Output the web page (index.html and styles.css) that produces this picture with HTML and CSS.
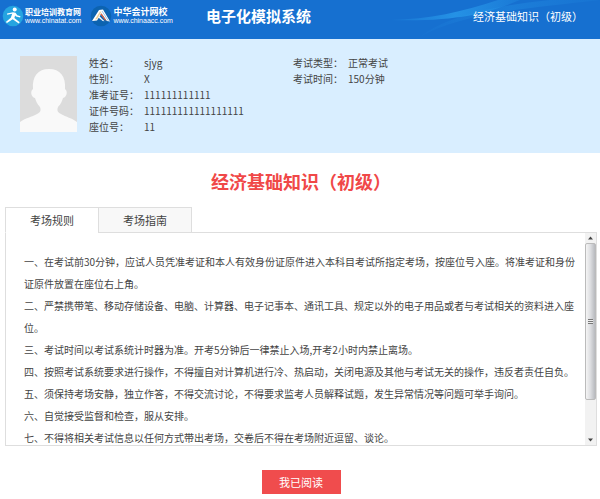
FILE: index.html
```html
<!DOCTYPE html>
<html lang="zh-CN">
<head>
<meta charset="utf-8">
<meta name="viewport" content="width=device-width, initial-scale=1">
<title>电子化模拟系统</title>
<link rel="stylesheet" href="styles.css">
</head>
<body>
<header class="topbar">
  <svg class="swoosh" viewBox="0 0 210 39" aria-hidden="true">
    <defs>
      <linearGradient id="beam" x1="0" x2="1" y1="0" y2="0">
        <stop offset="0" stop-color="#2ba0ee" stop-opacity=".1"/>
        <stop offset=".5" stop-color="#2ba0ee" stop-opacity=".7"/>
        <stop offset="1" stop-color="#2ba0ee" stop-opacity=".2"/>
      </linearGradient>
    </defs>
    <path d="M0 20C40 19 72 12 108 0h22C100 12 70 22 0 20z" fill="url(#beam)"/>
    <path d="M30 37C55 17 100 6 160 0h50C130 9 70 14 30 37z" fill="url(#beam)" opacity=".4"/>
  </svg>
  <a class="brand" href="#">
    <svg class="brand-icon" viewBox="0 0 22 22" aria-hidden="true">
      <circle cx="11" cy="11" r="10.3" fill="#25a4e0"/>
      <circle cx="12.7" cy="4.5" r="2" fill="#fff"/>
      <path d="M5 8.5l6-1.2 2.5.4 1.8 2.5 3.2 1-.4 1.2-4-1-1-1-.7 2.5 5.3 4.3-1 1.2-6-4.2L5 18l-1.2-1.1 5-4.2 1.4-4-5 1z" fill="#fff"/>
    </svg>
    <span class="brand-text"><b class="brand-name">职业培训教育网</b><span class="brand-url">www.chinatat.com</span></span>
  </a>
  <a class="brand" href="#">
    <svg class="brand-icon" viewBox="0 0 22 22" aria-hidden="true">
      <circle cx="11" cy="11" r="10.3" fill="#0c63b0"/>
      <path d="M2 16L9 5l4-.5 7 12-3.2-.6-5.3-7.4L7 15.5z" fill="#fff"/>
      <path d="M5 14.5l5-8 1.2.5-4 7z" fill="#edcf95"/>
      <path d="M10.2 9.3l1.3-.8 5 7-1.5-.3z" fill="#e3643f"/>
      <path d="M8.3 12.5l1-1.5 5.2 5.3-1.8-.3z" fill="#f4f7fa"/>
      <path d="M12 6l6.3 9.8" stroke="#77a9d6" stroke-width=".7"/>
    </svg>
    <span class="brand-text"><b class="brand-name brand-name-large">中华会计网校</b><span class="brand-url">www.chinaacc.com</span></span>
  </a>
  <strong class="system">电子化模拟系统</strong>
  <span class="subject">经济基础知识（初级）</span>
</header>

<section class="candidate">
  <svg class="photo" viewBox="0 0 57 76" role="img" aria-label="考生照片">
    <path fill="#dcdcdc" d="M0 0h57v76H0z"/>
    <path fill="#f9f9f9" d="M0 76V66c5-4 12-5 17-8 4-2 4-4 3-7-3-3-4-6-5-9-4-1-5-7-2-9-1-13 5-20 16-20s17 7 16 20c3 2 2 8-2 9-1 3-2 6-5 9-1 3-1 5 3 7 5 3 11 4 16 8v10z"/>
  </svg>
  <dl class="facts">
    <dt>姓名：</dt><dd>sjyg</dd>
    <dt>性别：</dt><dd>X</dd>
    <dt>准考证号：</dt><dd>111111111111</dd>
    <dt>证件号码：</dt><dd>111111111111111111</dd>
    <dt>座位号：</dt><dd>11</dd>
  </dl>
  <dl class="facts">
    <dt>考试类型：</dt><dd>正常考试</dd>
    <dt>考试时间：</dt><dd>150分钟</dd>
  </dl>
</section>

<main class="content">
  <h1 class="title">经济基础知识（初级）</h1>
  <div class="tabs" role="tablist">
    <button class="tab tab-active" type="button" role="tab" id="tab-rules" aria-selected="true" aria-controls="rules">考场规则</button>
    <button class="tab" type="button" role="tab" aria-selected="false">考场指南</button>
  </div>
  <div class="panel">
    <div class="rules" id="rules" role="tabpanel" aria-labelledby="tab-rules" tabindex="0">
      <p>一、在考试前30分钟，应试人员凭准考证和本人有效身份证原件进入本科目考试所指定考场，按座位号入座。将准考证和身份证原件放置在座位右上角。</p>
      <p>二、严禁携带笔、移动存储设备、电脑、计算器、电子记事本、通讯工具、规定以外的电子用品或者与考试相关的资料进入座位。</p>
      <p>三、考试时间以考试系统计时器为准。开考5分钟后一律禁止入场,开考2小时内禁止离场。</p>
      <p>四、按照考试系统要求进行操作，不得擅自对计算机进行冷、热启动，关闭电源及其他与考试无关的操作，违反者责任自负。</p>
      <p>五、须保持考场安静，独立作答，不得交流讨论，不得要求监考人员解释试题，发生异常情况等问题可举手询问。</p>
      <p>六、自觉接受监督和检查，服从安排。</p>
      <p>七、不得将相关考试信息以任何方式带出考场，交卷后不得在考场附近逗留、谈论。</p>
    </div>
    <div class="scrollbar" aria-hidden="true">
      <svg class="arrow" viewBox="0 0 11 10"><path d="M3 6.5l2.5-3 2.5 3z" fill="#444"/></svg>
      <div class="thumb"><span class="grip"></span></div>
      <div class="track"></div>
      <svg class="arrow" viewBox="0 0 11 10"><path d="M3 3.5l2.5 3 2.5-3z" fill="#444"/></svg>
    </div>
  </div>
  <button class="confirm" type="button">我已阅读</button>
</main>
</body>
</html>
```
FILE: styles.css
```css
* {
  box-sizing: border-box;
}

body {
  margin: 0;
  background: #fff;
  color: #444;
  font: 10px/16px "Noto Sans CJK SC", sans-serif;
}

button {
  font: inherit;
  color: inherit;
  cursor: pointer;
}

.topbar {
  position: relative;
  display: flex;
  align-items: center;
  height: 39px;
  padding: 0 17px 8px 2px;
  background: #1670d0;
  color: #fff;
}

.swoosh {
  position: absolute;
  top: 0;
  right: 0;
  height: 39px;
}

.brand {
  display: flex;
  align-items: center;
  gap: 1px;
  margin-right: 9px;
  color: inherit;
  text-decoration: none;
}

.brand-icon {
  width: 22px;
  height: 22px;
}

.brand-text {
  display: flex;
  flex-direction: column;
}

.brand-name {
  font-size: 8px;
  line-height: 10px;
}

.brand-name-large {
  font-size: 9px;
}

.brand-url {
  font: 7px/8px "Liberation Sans", sans-serif;
}

.system {
  margin-left: 24px;
  font-size: 15px;
}

.subject {
  position: relative;
  margin-left: auto;
  font-size: 11px;
}

.candidate {
  display: flex;
  align-items: flex-start;
  height: 114px;
  padding: 16px 20px;
  background: #d9eeff;
}

.photo {
  width: 57px;
  height: 76px;
  margin: 1px 12px 0 0;
}

.facts {
  display: grid;
  grid-template-columns: 55px auto;
  width: 204px;
  margin: 0;
}

.facts dd {
  margin: 0;
}

.content {
  display: flex;
  flex-direction: column;
  padding: 15px 3px 4px 5px;
}

.title {
  margin: 0 0 13px;
  color: #f04848;
  font-size: 18px;
  line-height: 26px;
  text-align: center;
}

.tabs {
  position: relative;
  display: flex;
  margin-bottom: -1px;
}

.tab {
  width: 94px;
  height: 26px;
  margin-right: -1px;
  padding: 0;
  border: 1px solid #dedede;
  background: #f8f8f8;
  font-size: 11px;
}

.tab-active {
  border-bottom-color: #fff;
  background: #fff;
}

.panel {
  display: flex;
  height: 214px;
  border: 1px solid #dedede;
}

.rules {
  flex: 1;
  padding: 18px 8px 0 18px;
  overflow-y: auto;
  scrollbar-width: none;
  line-height: 22px;
}

.rules p {
  margin: 0;
}

.scrollbar {
  display: flex;
  flex-direction: column;
  width: 11px;
  background: #f2f2f2;
}

.arrow {
  width: 11px;
  height: 10px;
}

.thumb {
  display: flex;
  flex: 9;
  align-items: center;
  justify-content: center;
  border: 1px solid #bbb;
  border-radius: 2px;
  background: linear-gradient(90deg, #f5f5f5, #dcdde0 50%, #b8babf);
}

.track {
  flex: 2;
}

.grip {
  width: 5px;
  height: 5px;
  background: repeating-linear-gradient(#777 0 1px, #eee 1px 2px);
}

.confirm {
  align-self: center;
  width: 79px;
  height: 24px;
  margin-top: 24px;
  padding: 0;
  border: 0;
  background: #f04c4d;
  color: #fff;
  font-size: 11px;
}
```
